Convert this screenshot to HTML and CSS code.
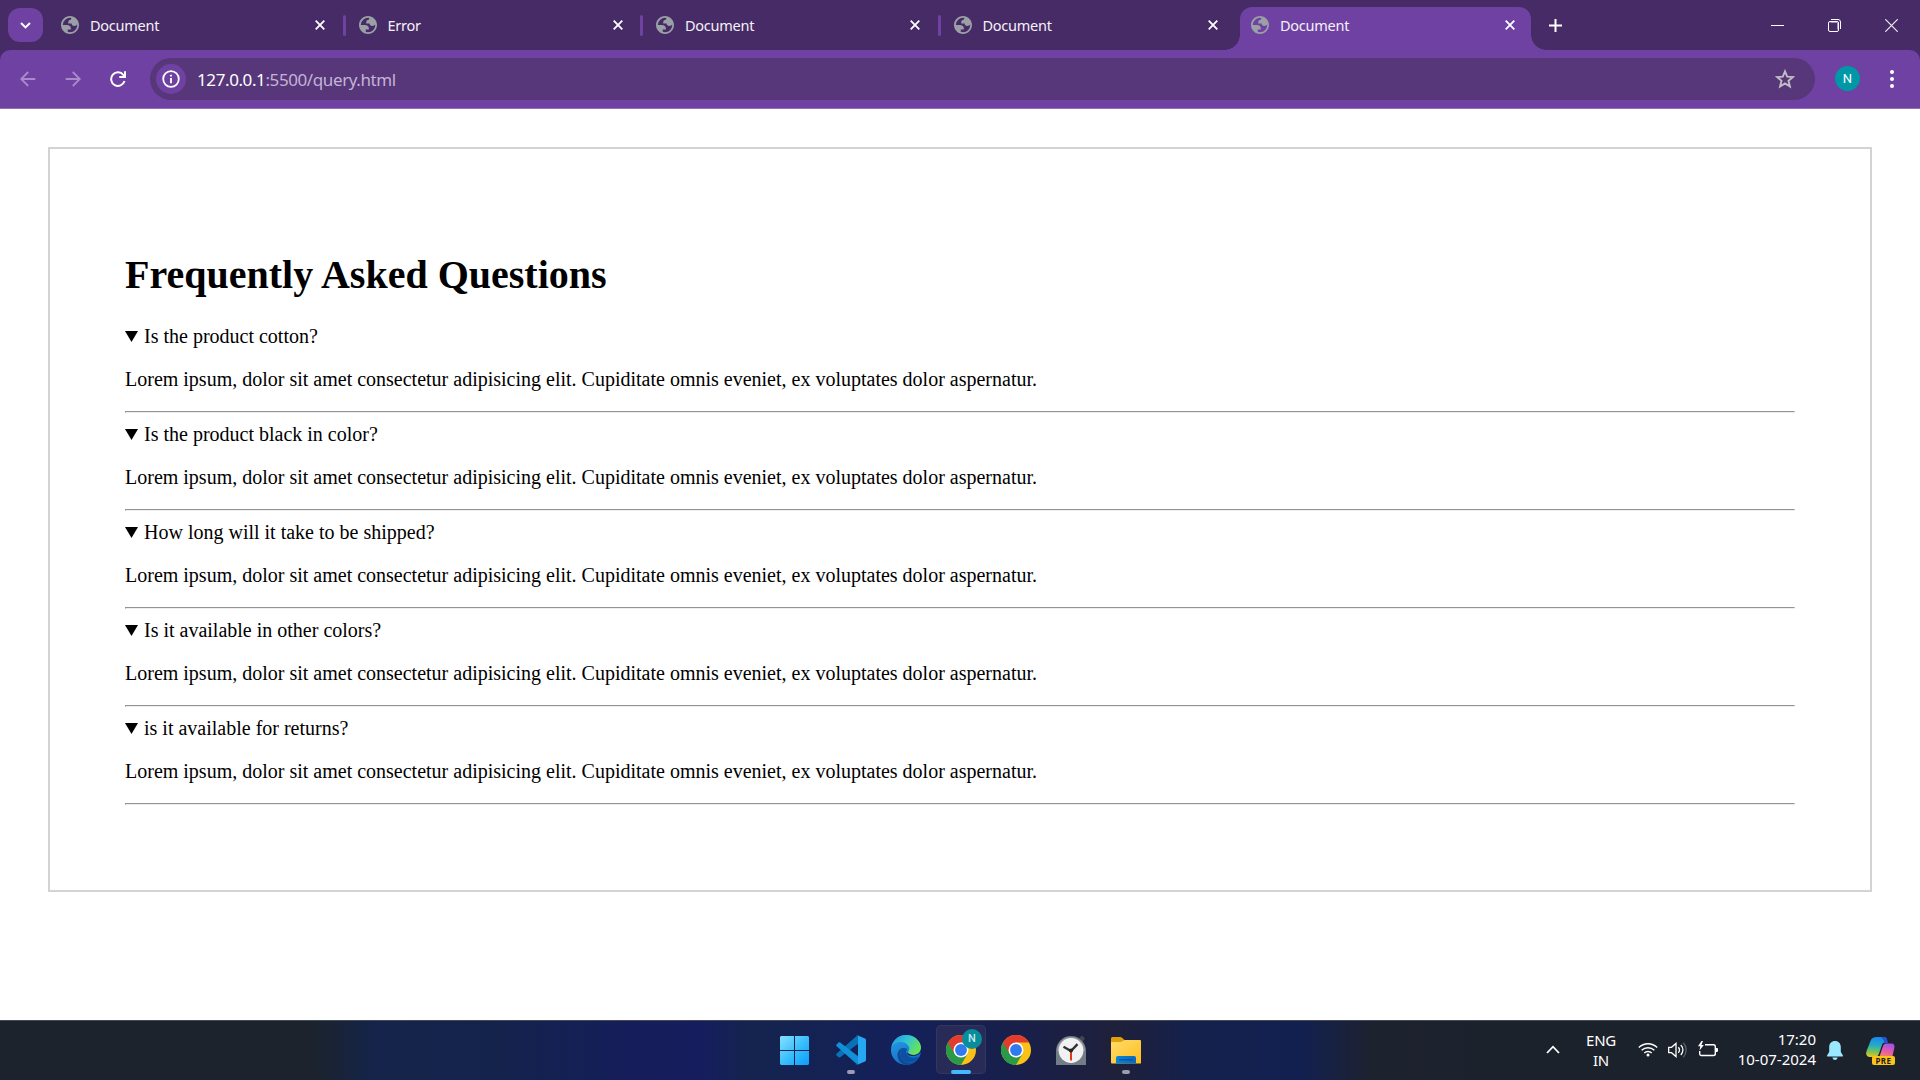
FILE: index.html
```html
<!DOCTYPE html>
<html lang="en">
<head>
<meta charset="utf-8">
<title>Document</title>
<link rel="stylesheet" href="styles.css">
</head>
<body>
<svg class="defs" width="0" height="0" aria-hidden="true">
  <defs>
    <symbol id="globe" viewBox="2 2 20 20"><path fill="#9aa0a6" fill-rule="evenodd" d="M12 2C6.48 2 2 6.48 2 12s4.48 10 10 10 10-4.48 10-10S17.52 2 12 2zM4 12h4.400c3.407.022 4.922 1.730 4.543 5.127H9.488v2.470a8.004 8.004 0 0 0 10.498-8.083C19.327 12.504 18.332 13 17 13c-2.137 0-3.206-.916-3.206-2.750h-3.748c-.274-2.728.683-4.092 2.870-4.092 0-.975.327-1.597.811-1.970A8.004 8.004 0 0 0 4 12z"/></symbol>
    <symbol id="cross" viewBox="0 0 10 10"><path d="M.7.7l8.600 8.600M9.300.7L.7 9.300" stroke="#fff" stroke-width="1.800" fill="none"/></symbol>
    <symbol id="chrome" viewBox="0 0 48 48">
      <circle cx="24" cy="24" r="24" fill="#fbc116"/>
      <path d="M24 24L3.200 12A24 24 0 0 0 24 48L34.400 30z" fill="#2a9a48"/>
      <path d="M3.200 12A24 24 0 0 1 44.800 12H24L13.600 30z" fill="#e33b2e"/>
      <circle cx="24" cy="24" r="12" fill="#fff"/>
      <circle cx="24" cy="24" r="9.500" fill="#3079ee"/>
    </symbol>
    <linearGradient id="win" x1="0" y1="0" x2="1" y2="1"><stop offset="0" stop-color="#86e0ff"/><stop offset=".5" stop-color="#3cc0fb"/><stop offset="1" stop-color="#0a9dff"/></linearGradient>
    <linearGradient id="edgeTop" x1="0" y1="0" x2="1" y2=".5"><stop offset="0" stop-color="#1d94e0"/><stop offset=".5" stop-color="#2fc2da"/><stop offset="1" stop-color="#65e456"/></linearGradient>
    <linearGradient id="edgeBody" x1="0" y1="0" x2=".5" y2="1"><stop offset="0" stop-color="#2d9fe0"/><stop offset="1" stop-color="#0c6fd0"/></linearGradient>
    <linearGradient id="fold" x1="0" y1="0" x2="1" y2="1"><stop offset="0" stop-color="#ffdc6a"/><stop offset="1" stop-color="#fdbe20"/></linearGradient>
    <linearGradient id="foldBlue" x1="0" y1="0" x2="1" y2="0"><stop offset="0" stop-color="#0a84d8"/><stop offset="1" stop-color="#0869bf"/></linearGradient>
    <linearGradient id="copLeft" x1=".4" y1="0" x2=".3" y2="1"><stop offset="0" stop-color="#1a86ee"/><stop offset=".4" stop-color="#22aac8"/><stop offset=".75" stop-color="#7cc455"/><stop offset="1" stop-color="#f2c21c"/></linearGradient>
    <linearGradient id="copRight" x1=".6" y1="0" x2=".3" y2="1"><stop offset="0" stop-color="#a050ee"/><stop offset=".5" stop-color="#e35ba8"/><stop offset="1" stop-color="#fa8b5c"/></linearGradient>
  </defs>
</svg>

<header class="browser">
  <div class="tabstrip">
    <button class="tab-search" aria-label="Search tabs"><svg width="11" height="7" viewBox="0 0 11 7"><path d="M1 1l4.500 4.400L10 1" fill="none" stroke="#fff" stroke-width="2"/></svg></button>
    <div class="tabs">
      <div class="tab"><svg class="favicon"><use href="#globe"/></svg><span class="title">Document</span><svg class="close"><use href="#cross"/></svg></div>
      <div class="tab"><svg class="favicon"><use href="#globe"/></svg><span class="title">Error</span><svg class="close"><use href="#cross"/></svg></div>
      <div class="tab"><svg class="favicon"><use href="#globe"/></svg><span class="title">Document</span><svg class="close"><use href="#cross"/></svg></div>
      <div class="tab"><svg class="favicon"><use href="#globe"/></svg><span class="title">Document</span><svg class="close"><use href="#cross"/></svg></div>
      <div class="tab active"><svg class="favicon"><use href="#globe"/></svg><span class="title">Document</span><svg class="close"><use href="#cross"/></svg></div>
    </div>
    <svg class="new-tab" width="13" height="13" viewBox="0 0 13 13"><path d="M6.500 0v13M0 6.500h13" stroke="#fff" stroke-width="2"/></svg>
    <div class="window-controls">
      <svg width="13" height="13" viewBox="0 0 13 13"><path d="M0 6.500h13" stroke="#fff"/></svg>
      <svg width="13" height="13" viewBox="0 0 13 13" fill="none" stroke="#fff"><rect x=".5" y="2.500" width="10" height="10" rx="1.500"/><path d="M2.500 3.500h7v7" stroke="#a594b5" stroke-width="1"/><path d="M3 .5h7a2.500 2.500 0 0 1 2.500 2.500v7"/></svg>
      <svg width="13" height="13" viewBox="0 0 13 13"><path d="M.3.3l12.400 12.400M12.700.3L.3 12.700" stroke="#eee" stroke-width="1.200"/></svg>
    </div>
  </div>
  <div class="toolbar">
    <div class="nav">
      <svg width="16" height="16" viewBox="0 0 16 16" fill="none" stroke="#a98bc9" stroke-width="1.800"><path d="M15.300 8H1.700M8.200 1L1.200 8l7 7"/></svg>
      <svg width="16" height="16" viewBox="0 0 16 16" fill="none" stroke="#a98bc9" stroke-width="1.800"><path d="M.7 8h13.600M7.800 1l7 7-7 7"/></svg>
      <svg width="16" height="16" viewBox="0 0 16 16" fill="none" stroke="#fff" stroke-width="2"><path d="M14.500 10A6.800 6.800 0 1 1 13.400 4L14.500 5.600M15 .3V6H9.300"/></svg>
    </div>
    <div class="address">
      <span class="site-info"><svg width="18" height="18" viewBox="0 0 18 18"><circle cx="9" cy="9" r="7.800" fill="none" stroke="#fff" stroke-width="1.800"/><path d="M9 8v5.200M9 4.700v1.900" stroke="#fff" stroke-width="1.900"/></svg></span>
      <span class="url"><b>127.0.0.1</b>:5500/query.html</span>
      <svg class="star" width="20" height="20" viewBox="0 0 20 20"><path d="M10 2.400l2.200 5.300 5.700.4-4.400 3.700 1.400 5.700-4.900-3.100-4.900 3.100 1.400-5.700-4.400-3.700 5.700-.4z" fill="none" stroke="#c2bfc4" stroke-width="1.900"/></svg>
    </div>
    <span class="avatar">N</span>
    <svg class="menu" width="4" height="18" viewBox="0 0 4 18" fill="#fff"><circle cx="2" cy="2" r="2"/><circle cx="2" cy="9" r="2"/><circle cx="2" cy="16" r="2"/></svg>
  </div>
</header>

<main class="page">
  <section class="faq">
    <h1>Frequently Asked Questions</h1>
    <details open><summary>Is the product cotton?</summary><p>Lorem ipsum, dolor sit amet consectetur adipisicing elit. Cupiditate omnis eveniet, ex voluptates dolor aspernatur.</p></details>
    <hr>
    <details open><summary>Is the product black in color?</summary><p>Lorem ipsum, dolor sit amet consectetur adipisicing elit. Cupiditate omnis eveniet, ex voluptates dolor aspernatur.</p></details>
    <hr>
    <details open><summary>How long will it take to be shipped?</summary><p>Lorem ipsum, dolor sit amet consectetur adipisicing elit. Cupiditate omnis eveniet, ex voluptates dolor aspernatur.</p></details>
    <hr>
    <details open><summary>Is it available in other colors?</summary><p>Lorem ipsum, dolor sit amet consectetur adipisicing elit. Cupiditate omnis eveniet, ex voluptates dolor aspernatur.</p></details>
    <hr>
    <details open><summary>is it available for returns?</summary><p>Lorem ipsum, dolor sit amet consectetur adipisicing elit. Cupiditate omnis eveniet, ex voluptates dolor aspernatur.</p></details>
    <hr>
  </section>
</main>

<footer class="taskbar">
  <div class="apps">
    <div class="app start"><svg width="29" height="29" viewBox="0 0 29 29"><path fill="url(#win)" d="M1 0h13v14H0V1zM15 0h13l1 1v13H15zM0 15h14v14H1l-1-1zM15 15h14v13l-1 1H15z"/></svg></div>
    <div class="app running"><svg width="30" height="30" viewBox="0 0 30 30"><path d="M1 18.200L21.500.2 23 8 4.200 22.300c-.6.400-1.200.4-1.700 0L.6 20.500c-.7-.7-.6-1.700.4-2.300z" fill="#0872b8"/><path d="M1 11.600L21.500 29.700 23 22 4.200 7.600c-.6-.4-1.200-.4-1.700 0L.6 9.400c-.7.700-.6 1.600.4 2.200z" fill="#118fd8"/><path d="M21.300.2L29 3.400c.6.300 1 .8 1 1.500v20.200c0 .7-.4 1.200-1 1.500l-7.700 3.200c-.6.200-1.200.1-1.700-.4 1.100.8 2.400.2 2.400-1.200V1.800c0-1.400-1.300-2-2.400-1.200.5-.4 1.100-.6 1.700-.4z" fill="#25a7f2"/></svg></div>
    <div class="app"><svg width="30" height="30" viewBox="0 0 30 30"><circle cx="15" cy="15" r="15" fill="url(#edgeBody)"/><path d="M11.500 13C8 17 9 25 16 27.500c4 1.500 9 0 12-5.500A15 15 0 0 1 15 30C9 29 6.500 24 6.500 20c0-4 2.500-6.500 5-7z" fill="#114a91"/><path d="M11.500 13c-4 5-1.500 14 7 14.500 4.500 0 8-3 9.500-6-4 2-11 1.500-12.500-3-.8-2.500.5-3.500.5-5z" fill="#0d50a2"/><path d="M.2 13A15 15 0 0 1 15 0c9 0 15 6.500 15 12.500 0 4.500-3.500 7.500-7.500 7.500-3 0-5.500-1-5.500-2.500 0-1 1.300-1.500 1.300-4C18.300 10.500 15 7 9.500 7 5 7 1.500 9.500.2 13z" fill="url(#edgeTop)"/><path d="M30 17c-2 3-6 4.600-10.500 3.800-3-.6-4-2.500-2.500-3.300 0 1.500 2.500 2.500 5.500 2.500 4 0 7.100-2.300 7.500-6z" fill="#15205a"/></svg></div>
    <div class="app selected"><svg width="30" height="30"><use href="#chrome"/></svg><span class="badge">N</span></div>
    <div class="app"><svg width="30" height="30"><use href="#chrome"/></svg></div>
    <div class="app"><svg width="30" height="31" viewBox="0 0 30 31"><path d="M23 3l3-2.500 3 3L26.500 7z" fill="#45464c"/><path d="M0 16A15 15 0 0 1 30 16v14H0z" fill="#737d87"/><path d="M2 16A13 13 0 0 1 28 16" fill="none" stroke="#8e969e" stroke-width="2"/><circle cx="15" cy="15.500" r="12.400" fill="#f1f1f3"/><path d="M7.500 11.800l7.500 4.200 6.500-6.800" fill="none" stroke="#303236" stroke-width="2.400"/><path d="M15 16v9.500" stroke="#db3b10" stroke-width="2"/><circle cx="15" cy="15.500" r="2" fill="#222"/></svg></div>
    <div class="app running"><svg width="30" height="27" viewBox="0 0 30 27"><path d="M0 1.500Q0 0 1.500 0h7.800q1 0 1.700.7L13.500 3 10 6H0z" fill="#e0a008"/><path d="M0 5h9.500q1 0 1.800-.7l1-.8q.6-.5 1.500-.5H29q1 0 1 1v22q0 .5-1 .5H1q-1 0-1-1z" fill="url(#fold)"/><path d="M5 26.500V21q0-2 2-2h16q2 0 2 2v5.500z" fill="url(#foldBlue)"/><path d="M8 22.800h14" stroke="#064f93" stroke-width="1.200"/></svg></div>
  </div>
  <div class="tray">
    <svg class="chevron" width="14" height="9" viewBox="0 0 14 9"><path d="M1 8l6-6.300L13 8" fill="none" stroke="#fff" stroke-width="1.800"/></svg>
    <div class="lang">ENG<br>IN</div>
    <div class="status">
      <svg width="20" height="15" viewBox="0 0 20 15" fill="none" stroke="#fff" stroke-width="1.400"><path d="M.8 5.600a13 13 0 0 1 18.400 0M3.600 8.300a9.200 9.200 0 0 1 12.800 0M6.300 11a5.300 5.300 0 0 1 7.400 0"/><circle cx="10" cy="13" r="1.500" fill="#fff" stroke="none"/></svg>
      <svg width="20" height="16" viewBox="0 0 20 16" fill="none" stroke="#fff" stroke-width="1.300"><path d="M.7 5.300h2.800L8 1.500v13l-4.500-3.800H.7zM10.300 5.300a4 4 0 0 1 0 5.400M12.800 3a7 7 0 0 1 0 10"/><path d="M15.300.8a10.500 10.500 0 0 1 0 14.400" stroke="#596069"/></svg>
      <svg class="battery" width="20" height="18" viewBox="0 0 20 18"><path d="M7 4.700h8.500q1.800 0 1.800 1.800v7.200q0 1.800-1.800 1.800H3.200q-1.500 0-1.500-1.700V11" fill="none" stroke="#fff" stroke-width="1.400"/><path d="M18 8h1q1 0 1 1v2q0 1-1 1h-1zM3.500 1L0 6.300h2.300L1.500 10.500 5.800 5H3.400L5 1z" fill="#fff"/></svg>
    </div>
    <div class="clock">17:20<br>10-07-2024</div>
    <svg class="bell" width="16" height="19" viewBox="0 0 16 19"><path d="M8 0C4.500 0 2.200 2.600 2.200 6v5L.2 14.300q-.5 1.200.7 1.200h14.200q1.200 0 .7-1.200L13.800 11V6C13.800 2.600 11.500 0 8 0zM5.300 16.500h5.400Q10 19 8 19t-2.700-2.500z" fill="#99e8ff"/></svg>
    <div class="copilot"><svg width="29" height="21" viewBox="0 0 29 21"><path d="M10.500 0h7.200c3 0 3.200 2 4 5.500h-2.500c-2 0-2.900 1.200-3.400 3L13 16.500C12 19 11 20 8.500 20H4C1 20-.5 18 .4 14.500L4.500 4C5.500 1 7.500 0 10.500 0z" fill="url(#copLeft)"/><path d="M14.500 0h3.200c3 0 3.200 2 4 6h-2.500c-1.500-1-1.500-5-4.700-6z" fill="#2352d8"/><path d="M20 6.500h5.500c2.500 0 3.500 2 2.800 4.500L26 21H13l4.200-12.500q.8-2 2.800-2z" fill="url(#copRight)"/></svg><span class="pre">PRE</span></div>
  </div>
</footer>
</body>
</html>
```
FILE: styles.css
```css
* { box-sizing: border-box; }

body {
  margin: 0;
  width: 1920px;
  height: 1080px;
  display: flex;
  flex-direction: column;
  overflow: hidden;
  background: #fff;
  font-family: "Noto Sans", "Open Sans", sans-serif;
}

svg { display: block; flex: none; }
.defs { position: absolute; }

/* Browser window */
.browser { flex: none; height: 109px; background: #472b66; }

.tabstrip {
  height: 50px;
  display: flex;
  align-items: center;
  padding-left: 8px;
}

.tab-search {
  width: 35px;
  height: 34px;
  padding: 0;
  border: 0;
  border-radius: 12px;
  background: #6e41a2;
  display: grid;
  place-items: center;
}

.tabs { display: flex; align-self: stretch; margin-left: 7px; }

.tab {
  position: relative;
  width: 297.500px;
  display: flex;
  align-items: center;
  padding: 0 22.500px 0 11px;
}

.tab::after {
  content: "";
  position: absolute;
  right: 2px;
  top: 15px;
  width: 3px;
  height: 21px;
  border-radius: 2px;
  background: #6e41a2;
}

.tab:nth-child(4)::after { display: none; }

.tab.active {
  width: 291px;
  margin: 7px 0 0;
  padding: 0 16px 7px 11px;
  border-radius: 12px 12px 0 0;
  background: #6e41a2;
}

.tab.active::before,
.tab.active::after {
  content: "";
  position: absolute;
  top: auto;
  bottom: 0;
  width: 15px;
  height: 15px;
  border-radius: 0;
}

.tab.active::before { left: -15px; background: radial-gradient(circle at 0 0, transparent 14.500px, #6e41a2 15px); }
.tab.active::after { right: -15px; background: radial-gradient(circle at 100% 0, transparent 14.500px, #6e41a2 15px); }

.favicon { width: 18px; height: 18px; }
.close { width: 10px; height: 10px; }

.title {
  flex: 1;
  padding-left: 11px;
  color: #f5f1f8;
  font-size: 14.500px;
  line-height: 20px;
  letter-spacing: -.25px;
}

.new-tab { margin-left: 18px; }

.window-controls {
  margin-left: auto;
  display: flex;
  gap: 44px;
  padding-right: 22px;
}

.toolbar {
  height: 59px;
  display: flex;
  align-items: center;
  padding-left: 20px;
  border-radius: 10px 10px 0 0;
  border-bottom: 1px solid #9270b5;
  background: #6e41a2;
}

.nav { display: flex; gap: 29px; width: 130px; }

.address {
  width: 1665px;
  height: 42px;
  display: flex;
  align-items: center;
  padding: 0 20px 0 6px;
  border-radius: 21px;
  background: #573779;
}

.site-info {
  width: 30px;
  height: 30px;
  border-radius: 50%;
  background: #6e41a2;
  display: grid;
  place-items: center;
}

.url { flex: 1; padding-left: 11px; color: #c4b3d6; font-size: 17px; letter-spacing: -.4px; }
.url b { font-weight: 400; color: #fff; }

.avatar {
  width: 25px;
  height: 25px;
  margin: 0 0 1px 20px;
  border-radius: 50%;
  background: #0097a7;
  color: #fff;
  font: 400 13px/25px Roboto, sans-serif;
  text-align: center;
}

.menu { margin-left: 30px; }

/* Web page */
.page {
  flex: 1;
  padding: 38px 48px 0;
  font: 20px/23px "Liberation Serif", serif;
  color: #000;
}

.faq { height: 745px; padding: 76px 75px 75px; border: 2px solid #d3d3d3; }
.faq h1 { margin: 27px 0; font-size: 40px; line-height: 46px; }
.faq p { margin: 20px 0; }

.faq summary { display: flex; list-style: none; }

.faq summary::before {
  content: "";
  width: 13px;
  height: 11px;
  margin: 6px 6px 0 0;
  background: #000;
  clip-path: polygon(0 0, 100% 0, 50% 100%);
}

.faq hr {
  height: 2px;
  margin: 10px 0;
  border: 1px solid;
  border-color: #939393 #eee #eee #939393;
}

/* Taskbar */
.taskbar {
  position: relative;
  flex: none;
  height: 60px;
  display: flex;
  align-items: center;
  border-top: 1px solid #444b58;
  background: linear-gradient(90deg, #1c232c 0, #1c232c 310px, #14244a 375px, #14234c 500px, #151e59 620px, #161d5e 700px, #14244e 750px, #14205a 900px, #171f4c 1000px, #1f203a 1120px, #14214c 1190px, #122051 1300px, #1d222f 1370px, #1c222c 1500px, #1c222c 1920px);
}

.apps { display: flex; gap: 5px; padding: 4px 0 6px 771px; }

.app {
  position: relative;
  width: 50px;
  height: 49px;
  padding-top: 1px;
  border-radius: 5px;
  display: grid;
  place-items: center;
}

.start { padding-right: 3px; }
.selected { background: #282b57; box-shadow: inset 0 0 0 1px #34365e; }

.running::after,
.selected::after {
  content: "";
  position: absolute;
  bottom: 0;
  left: 21px;
  width: 8px;
  height: 4px;
  border-radius: 2px;
  background: #9b9cb2;
}

.selected::after { left: 15px; width: 20px; background: #45b8ff; }

.badge {
  position: absolute;
  left: 26px;
  top: 4px;
  width: 20px;
  height: 20px;
  border-radius: 50%;
  background: #078d9b;
  color: #c5e8ea;
  font: 500 11px/20px Roboto, sans-serif;
  text-align: center;
}

.tray {
  flex: 1;
  display: flex;
  align-items: center;
  padding: 0 0 2px 395px;
  color: #fff;
  font-size: 15px;
  line-height: 20px;
}

.lang { width: 40px; margin-left: 21px; text-align: center; letter-spacing: -.3px; }
.status { display: flex; align-items: center; gap: 10px; margin-left: 17px; }
.battery { margin-bottom: 2px; }
.clock { width: 98px; padding-bottom: 2px; text-align: right; white-space: nowrap; }
.bell { margin: 2px 0 0 11px; }

.copilot { position: relative; margin: 2px 0 0 23px; width: 29px; height: 28px; }

.pre {
  position: absolute;
  left: 6px;
  bottom: 0;
  width: 23px;
  height: 9px;
  border-radius: 2px;
  background: #fcc419;
  color: #1b1b1b;
  font: 700 8px/9px "Noto Sans", sans-serif;
  letter-spacing: .5px;
  text-align: center;
}
```
